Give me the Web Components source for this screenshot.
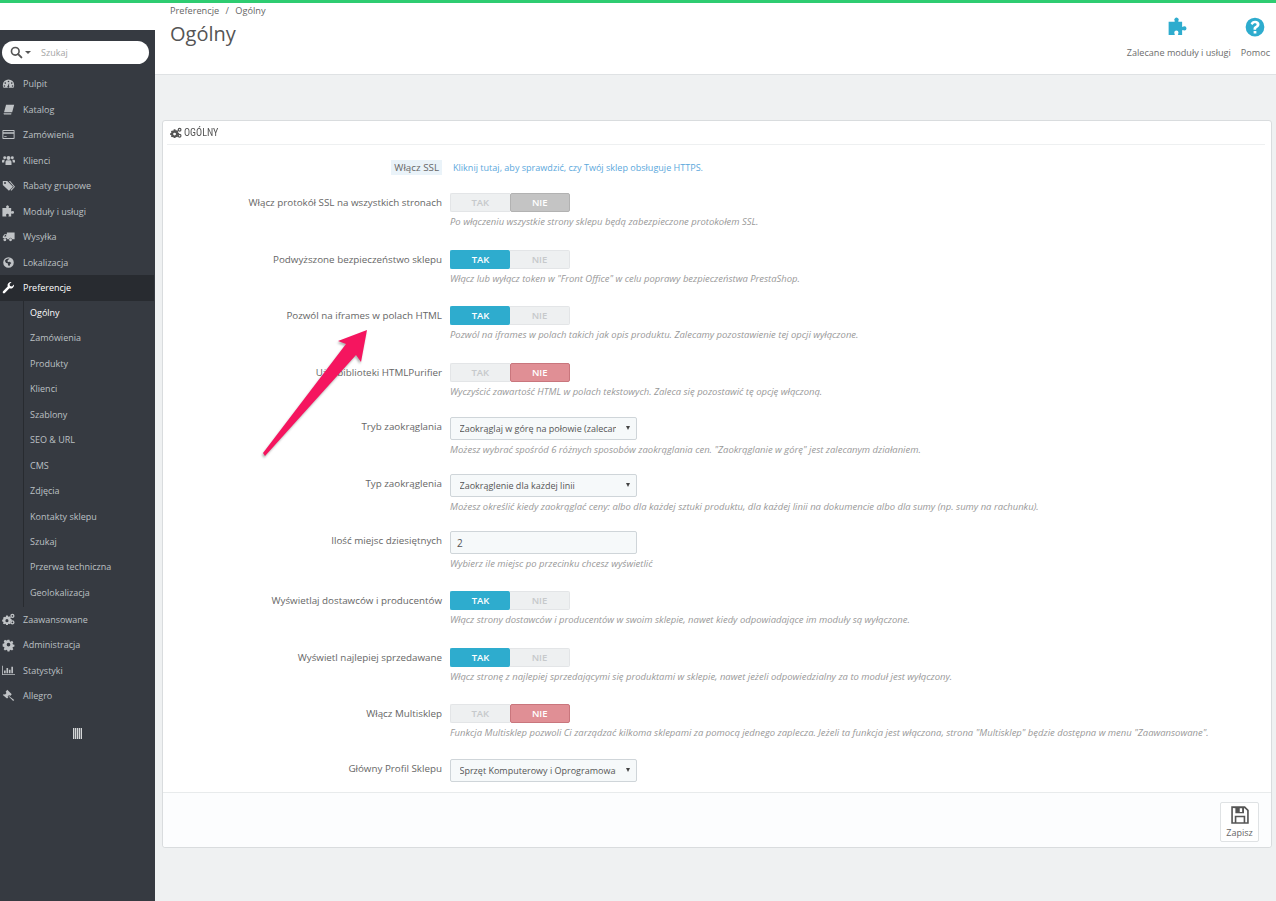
<!DOCTYPE html>
<html lang="pl">
<head>
<meta charset="utf-8">
<title>Ogólny</title>
<style>
html, body { margin: 0; padding: 0; }
body { background: #eff1f2; font-family: "Open Sans", "Liberation Sans", sans-serif; font-size: 10px; color: #555; }
</style>
</head>
<body>
<admin-app>
	<side-bar slot="side">
		<nav-item icon="dashboard">Pulpit</nav-item>
		<nav-item icon="book">Katalog</nav-item>
		<nav-item icon="card">Zamówienia</nav-item>
		<nav-item icon="users">Klienci</nav-item>
		<nav-item icon="tags">Rabaty grupowe</nav-item>
		<nav-item icon="puzzle">Moduły i usługi</nav-item>
		<nav-item icon="truck">Wysyłka</nav-item>
		<nav-item icon="globe">Lokalizacja</nav-item>
		<nav-item icon="wrench" active>Preferencje</nav-item>
		<sub-nav>
			<sub-item active>Ogólny</sub-item>
			<sub-item>Zamówienia</sub-item>
			<sub-item>Produkty</sub-item>
			<sub-item>Klienci</sub-item>
			<sub-item>Szablony</sub-item>
			<sub-item>SEO &amp; URL</sub-item>
			<sub-item>CMS</sub-item>
			<sub-item>Zdjęcia</sub-item>
			<sub-item>Kontakty sklepu</sub-item>
			<sub-item>Szukaj</sub-item>
			<sub-item>Przerwa techniczna</sub-item>
			<sub-item>Geolokalizacja</sub-item>
		</sub-nav>
		<nav-item icon="cogs">Zaawansowane</nav-item>
		<nav-item icon="cog">Administracja</nav-item>
		<nav-item icon="chart">Statystyki</nav-item>
		<nav-item icon="gavel">Allegro</nav-item>
	</side-bar>
	<page-header slot="head"></page-header>
	<form-panel slot="main" heading="Ogólny">
		<form-row label="Włącz SSL" mark>
			<a-link>Kliknij tutaj, aby sprawdzić, czy Twój sklep obsługuje HTTPS.</a-link>
		</form-row>
		<form-row label="Włącz protokół SSL na wszystkich stronach" help="Po włączeniu wszystkie strony sklepu będą zabezpieczone protokołem SSL.">
			<yes-no value="off"></yes-no>
		</form-row>
		<form-row label="Podwyższone bezpieczeństwo sklepu" help="Włącz lub wyłącz token w &quot;Front Office&quot; w celu poprawy bezpieczeństwa PrestaShop.">
			<yes-no value="on"></yes-no>
		</form-row>
		<form-row label="Pozwól na iframes w polach HTML" help="Pozwól na iframes w polach takich jak opis produktu. Zalecamy pozostawienie tej opcji wyłączone.">
			<yes-no value="on"></yes-no>
		</form-row>
		<form-row label="Użyj biblioteki HTMLPurifier" help="Wyczyścić zawartość HTML w polach tekstowych. Zaleca się pozostawić tę opcję włączoną.">
			<yes-no value="danger"></yes-no>
		</form-row>
		<form-row shift label="Tryb zaokrąglania" help="Możesz wybrać spośród 6 różnych sposobów zaokrąglania cen. &quot;Zaokrąglanie w górę&quot; jest zalecanym działaniem.">
			<fake-select>Zaokrąglaj w górę na połowie (zalecane)</fake-select>
		</form-row>
		<form-row shift label="Typ zaokrąglenia" help="Możesz określić kiedy zaokrąglać ceny: albo dla każdej sztuki produktu, dla każdej linii na dokumencie albo dla sumy (np. sumy na rachunku).">
			<fake-select>Zaokrąglenie dla każdej linii</fake-select>
		</form-row>
		<form-row tall label="Ilość miejsc dziesiętnych" help="Wybierz ile miejsc po przecinku chcesz wyświetlić">
			<text-box>2</text-box>
		</form-row>
		<form-row label="Wyświetlaj dostawców i producentów" help="Włącz strony dostawców i producentów w swoim sklepie, nawet kiedy odpowiadające im moduły są wyłączone.">
			<yes-no value="on"></yes-no>
		</form-row>
		<form-row label="Wyświetl najlepiej sprzedawane" help="Włącz stronę z najlepiej sprzedającymi się produktami w sklepie, nawet jeżeli odpowiedzialny za to moduł jest wyłączony.">
			<yes-no value="on"></yes-no>
		</form-row>
		<form-row label="Włącz Multisklep" help="Funkcja Multisklep pozwoli Ci zarządzać kilkoma sklepami za pomocą jednego zaplecza. Jeżeli ta funkcja jest włączona, strona &quot;Multisklep&quot; będzie dostępna w menu &quot;Zaawansowane&quot;.">
			<yes-no value="danger"></yes-no>
		</form-row>
		<form-row shift label="Główny Profil Sklepu">
			<fake-select>Sprzęt Komputerowy i Oprogramowanie</fake-select>
		</form-row>
	</form-panel>
	<red-arrow slot="over"></red-arrow>
</admin-app>

<script>
const ICONS = {
	search: '<circle cx="6.5" cy="6.5" r="4.7" fill="none" stroke="currentColor" stroke-width="2"/><path d="M10 10l4 4" stroke="currentColor" stroke-width="2.4" stroke-linecap="round"/>',
	dashboard: '<path fill-rule="evenodd" d="M8 3a7 7 0 0 1 7 7c0 1.300-.3 2.300-.9 3.300H1.900C1.300 12.300 1 11.300 1 10a7 7 0 0 1 7-7zM8 4.500a1 1 0 1 0 0 2 1 1 0 0 0 0-2zM4 6.500a1 1 0 1 0 0 2 1 1 0 0 0 0-2zM12 6.500a1 1 0 1 0 0 2 1 1 0 0 0 0-2zM3 10a1 1 0 1 0 0 2 1 1 0 0 0 0-2zM13 10a1 1 0 1 0 0 2 1 1 0 0 0 0-2zM8.800 7l-1.500 3.700a1.200 1.200 0 1 0 1.400.3z"/>',
	book: '<path d="M5 2h10l-2.500 9.500H2.500zM2 12.500h9.600l-.3 1.500H2.600a1.300 1.300 0 0 1-.6-1.500z"/>',
	card: '<path fill-rule="evenodd" d="M1.500 2.500h13a1 1 0 0 1 1 1v9a1 1 0 0 1-1 1h-13a1 1 0 0 1-1-1v-9a1 1 0 0 1 1-1zm.2 1.200v1.600h12.600V3.700zm0 3.500v5.100h12.600V7.200zm1 3h3v1h-3z"/>',
	users: '<circle cx="8" cy="5" r="2.500"/><circle cx="3.300" cy="4.700" r="1.800"/><circle cx="12.700" cy="4.700" r="1.800"/><path d="M4.300 13.500V10c0-1.500 1-2.300 2-2.300h3.400c1 0 2 .8 2 2.300v3.500zM0 10.500V8.500C0 7.500.7 7 1.500 7h2c-.5.700-.7 1.500-.7 2.500v1zM16 10.500V8.500C16 7.500 15.300 7 14.500 7h-2c.5.700.7 1.500.7 2.500v1z"/>',
	tags: '<path fill-rule="evenodd" d="M1 2.500h5.500l7 7-5 5-7.500-7zm2.700 1.300a1.200 1.200 0 1 0 0 2.400 1.200 1.200 0 0 0 0-2.400z"/><path d="M8.500 2.500h1.500l6 7-4.500 5-1-1 4-4z"/>',
	puzzle: '<path d="M5.500 1.200a1.700 1.700 0 0 1 3.100.8c0 .6-.4.9-.4 1.300 0 .3.200.5.600.5h2.500v3.500c0 .4.200.6.500.6.400 0 .7-.5 1.300-.5a1.700 1.700 0 0 1 0 3.400c-.6 0-.9-.4-1.300-.4-.3 0-.5.200-.5.600v3.300H8.500c-.4 0-.6-.2-.6-.5 0-.4.500-.7.500-1.300a1.700 1.700 0 0 0-3.400 0c0 .6.500.9.500 1.300 0 .3-.2.500-.6.500H.5V3.800h4.300c.4 0 .6-.2.600-.5 0-.5-.4-.8-.4-1.300 0-.3.200-.6.500-.8z"/>',
	truck: '<path fill-rule="evenodd" d="M6 3h9.500v8.500h-3a2 2 0 0 0-4 0H6.500a2 2 0 0 0-1.300-1.800H1V8l2-2.800h3zM2.500 8h2.600V6.200H3.800z"/><circle cx="3.500" cy="12" r="1.800"/><circle cx="10.500" cy="12" r="1.800"/>',
	globe: '<path fill-rule="evenodd" d="M8 1.500a6.500 6.500 0 1 1 0 13 6.500 6.500 0 0 1 0-13zM5 4l-1.500 1.800L5 8.500l2 .5.500 2.500 1.500 1 1-2.500 1.500-1.500-2-1.500-2 .5-1-1.500L8 4.300 9.500 3.300 7.500 3z"/>',
	wrench: '<path d="M14.800 4.200a4.300 4.300 0 0 1-5.600 4.800l-5.700 5.700a1.500 1.500 0 0 1-2.200-2.200L7 6.800A4.300 4.300 0 0 1 11.800 1.200L9.300 3.700l.5 2.500 2.500.5z"/>',
	cog: '<path fill-rule="evenodd" d="M6.700 1.500h2.600l.4 2 1.300.6 1.800-1.100 1.800 1.800-1.100 1.800.6 1.300 2 .4v2.600l-2 .4-.6 1.300 1.100 1.800-1.800 1.800-1.800-1.100-1.300.6-.4 1.900H6.700l-.4-1.900-1.300-.6-1.800 1.100-1.800-1.800 1.100-1.800-.6-1.300-1.900-.4V6.900l1.900-.4.6-1.300L1.400 3.400l1.800-1.800L5 2.700l1.300-.6zM8 5.700a2.500 2.500 0 1 0 0 5 2.500 2.500 0 0 0 0-5z" transform="translate(.8 .8) scale(.9)"/>',
	cogs: '<path fill-rule="evenodd" d="M4 3.500h2.200l.3 1.200 1 .4 1-.6 1.500 1.500-.6 1 .4 1 1.200.3v2.200l-1.200.3-.4 1 .6 1-1.500 1.500-1-.6-1 .4-.3 1.200H4l-.3-1.200-1-.4-1 .6L.2 13.300l.6-1-.4-1L-.8 11V8.800L.4 8.500l.4-1-.6-1 1.500-1.500 1 .6 1-.4zM5.100 8a1.900 1.900 0 1 0 0 3.800 1.900 1.900 0 0 0 0-3.800z" transform="translate(1 -.5)"/><path fill-rule="evenodd" d="M12.800 1a2.600 2.600 0 1 1 0 5.200 2.600 2.600 0 0 1 0-5.200zm0 1.600a1 1 0 1 0 0 2 1 1 0 0 0 0-2zM12.800 9a2.600 2.600 0 1 1 0 5.200 2.600 2.600 0 0 1 0-5.200zm0 1.600a1 1 0 1 0 0 2 1 1 0 0 0 0-2z"/>',
	chart: '<path d="M0 2h1v10.500h15v1H0zM2.500 8h2v3.500h-2zM5.500 5h2v6.500h-2zM8.500 7h2v4.500h-2zM11.500 3.500h2v8h-2z"/>',
	gavel: '<path d="M7.500 1l5.500 5.500-2 2L9.800 7.300l-2 2 1 1-1.500 1.500-.5-.5L2 7.500l1.500-1.500 1 1 2-2L5.500 3.500z" transform="translate(-1 0)"/><path d="M8.500 8.500l6.500 5-1.200 1.300-5.800-5.800z"/>',
	question: '<path fill-rule="evenodd" d="M8 .5a7.500 7.500 0 1 1 0 15 7.500 7.500 0 0 1 0-15zM6.900 11.200v2h2.200v-2zM8.100 3C6.300 3 5 3.900 4.500 5.400l1.600.9c.4-1 1-1.400 1.900-1.400.800 0 1.300.4 1.300 1 0 .5-.3.800-1.100 1.300-1.100.7-1.400 1.400-1.400 2.400v.6h2.100v-.4c0-.5.200-.8 1-1.300 1.100-.7 1.700-1.400 1.700-2.700C11.600 4.200 10.100 3 8.100 3z"/>',
	save: '<path fill-rule="evenodd" d="M1 1h11l3 3v11H1zM2.300 2.300v11.400h1.500V8.500h8.400v5.200h1.500V4.600l-2-2h-.5v4H4.300v-4zM5.100 9.800v3.900h5.800V9.800zM7.800 2.600v2.900h1.900V2.600z"/>'
};

class SvgIcon extends HTMLElement {
	connectedCallback() {
		const size = this.getAttribute('size') || 16;
		const shadow = this.attachShadow({ mode: 'open' });
		shadow.innerHTML = `
		<style>
		:host { display: inline-flex; width: ${size}px; height: ${size}px; }
		svg { width: 100%; height: 100%; fill: currentColor; overflow: visible; }
		</style>
		<svg viewBox="0 0 16 16">${ICONS[this.getAttribute('name')] || ''}</svg>`;
	}
}
customElements.define('svg-icon', SvgIcon);

class AdminApp extends HTMLElement {
	constructor() {
		super();
		this.attachShadow({ mode: 'open' }).innerHTML = `
		<style>
		:host { display: block; position: relative; width: 1276px; min-height: 901px; border-top: 3px solid #2ecc71; box-sizing: border-box; }
		.head { background: #fff; border-bottom: 1px solid #dfe2e4; height: 72px; box-sizing: border-box; }
		.body { display: grid; grid-template-columns: 155px 1fr; margin-top: -45px; height: 871px; }
		.main { padding: 90px 4px 0 7px; min-width: 0; }
		</style>
		<div class="head"><slot name="head"></slot></div>
		<div class="body">
			<slot name="side"></slot>
			<div class="main"><slot name="main"></slot></div>
		</div>
		<slot name="over"></slot>`;
	}
}
customElements.define('admin-app', AdminApp);

class SideBar extends HTMLElement {
	constructor() {
		super();
		this.attachShadow({ mode: 'open' }).innerHTML = `
		<style>
		:host { display: block; background: #363a41; position: relative; }
		.search { display: flex; align-items: center; height: 23px; width: 147px; margin: 11px 0 0 2px; background: #fff; border-radius: 12px; box-sizing: border-box; padding-left: 8px; color: #555; }
		.caret { width: 0; height: 0; border: 3px solid transparent; border-top: 3px solid #555; border-bottom: 0; margin-left: 2px; }
		.ph { margin-left: 10px; font-size: 9px; color: #a5a5a5; }
		nav { display: block; margin-top: 7px; }
		.toggle { display: flex; justify-content: center; margin-top: 19px; }
		.bars { width: 9px; height: 11px; background: repeating-linear-gradient(90deg, #d5d7d8 0 1px, #6d7076 1px 2px); }
		</style>
		<div class="search"><svg-icon name="search" size="13"></svg-icon><span class="caret"></span><span class="ph">Szukaj</span></div>
		<nav><slot></slot></nav>
		<div class="toggle"><div class="bars"></div></div>`;
	}
}
customElements.define('side-bar', SideBar);

class NavItem extends HTMLElement {
	connectedCallback() {
		const shadow = this.attachShadow({ mode: 'open' });
		shadow.innerHTML = `
		<style>
		:host { display: flex; align-items: center; height: 25.5px; font-size: 9px; color: #bcc0c4; padding-left: 2px; box-sizing: border-box; }
		:host([active]) { background: #282b30; color: #fff; margin-right: 1px; }
		svg-icon { color: #c0c3c6; margin-right: 8px; }
		:host([active]) svg-icon { color: #fff; }
		</style>
		<svg-icon name="${this.getAttribute('icon')}" size="13"></svg-icon><slot></slot>`;
	}
}
customElements.define('nav-item', NavItem);

class SubNav extends HTMLElement {
	constructor() {
		super();
		this.attachShadow({ mode: 'open' }).innerHTML = `
		<style>
		:host { display: block; margin: -0.5px 0 0 23px; border-left: 1px solid #282b30; height: 305.5px; padding-left: 6px; padding-bottom: 1px; }
		</style>
		<slot></slot>`;
	}
}
customElements.define('sub-nav', SubNav);

class SubItem extends HTMLElement {
	constructor() {
		super();
		this.attachShadow({ mode: 'open' }).innerHTML = `
		<style>
		:host { display: block; line-height: 25.45px; height: 25.45px; font-size: 9px; color: #bcc0c4; }
		:host([active]) { color: #fff; }
		</style>
		<slot></slot>`;
	}
}
customElements.define('sub-item', SubItem);

class PageHeader extends HTMLElement {
	constructor() {
		super();
		this.attachShadow({ mode: 'open' }).innerHTML = `
		<style>
		:host { display: flex; justify-content: space-between; height: 71px; padding-left: 170px; font-size: 9.1px; color: #666; }
		.crumbs { padding-top: 1px; line-height: 13px; font-size: 9.2px; }
		.crumbs span { margin: 0 4px; }
		h1 { margin: 2px 0 0; font-size: 20px; line-height: 30px; font-weight: 400; color: #555; }
		.tools { display: flex; gap: 10px; padding: 14px 6px 0 0; }
		.tool { display: flex; flex-direction: column; align-items: center; gap: 9px; line-height: 13px; color: #6c6c6c; }
		.tool svg-icon { color: #2eacce; }
		.tool:first-child svg-icon { margin-right: 2px; }
		</style>
		<div>
			<div class="crumbs">Preferencje <span>/</span> Ogólny</div>
			<h1>Ogólny</h1>
		</div>
		<div class="tools">
			<div class="tool"><svg-icon name="puzzle" size="20"></svg-icon>Zalecane moduły i usługi</div>
			<div class="tool"><svg-icon name="question" size="20"></svg-icon>Pomoc</div>
		</div>`;
	}
}
customElements.define('page-header', PageHeader);

class FormPanel extends HTMLElement {
	connectedCallback() {
		const shadow = this.attachShadow({ mode: 'open' });
		shadow.innerHTML = `
		<style>
		:host { display: block; background: #fff; border: 1px solid #d9dcde; border-radius: 3px; box-sizing: border-box; height: 728px; position: relative; }
		.title { display: flex; align-items: center; gap: 2px; height: 23px; margin: 0 6px 0 4px; padding-left: 3px; border-bottom: 1px solid #eef0f1; color: #555; }
		.title b { font: 400 11px "Liberation Sans Narrow", "Roboto Condensed", "Liberation Sans", sans-serif; text-transform: uppercase; display: inline-block; transform: scaleX(.92); transform-origin: left; }
		.rows { display: block; padding-top: 13px; }
		.foot { position: absolute; left: 0; right: 0; bottom: 0; height: 55px; border-top: 1px solid #e8ebec; background: #fcfdfe; display: flex; justify-content: flex-end; align-items: flex-start; padding: 9px 12px 0 0; box-sizing: border-box; border-radius: 0 0 3px 3px; }
		.save { display: flex; flex-direction: column; align-items: center; justify-content: center; width: 39px; height: 40px; box-sizing: border-box; border: 1px solid #dfe2e4; border-radius: 2px; background: #fff; color: #666; font-size: 9px; gap: 1px; }
		.save svg-icon { color: #555; }
		</style>
		<div class="title"><svg-icon name="cogs" size="12"></svg-icon><b>${this.getAttribute('heading')}</b></div>
		<div class="rows"><slot></slot></div>
		<div class="foot"><div class="save"><svg-icon name="save" size="20"></svg-icon>Zapisz</div></div>`;
	}
}
customElements.define('form-panel', FormPanel);

class FormRow extends HTMLElement {
	connectedCallback() {
		const shadow = this.attachShadow({ mode: 'open' });
		const help = this.getAttribute('help');
		shadow.innerHTML = `
		<style>
		:host { display: grid; grid-template-columns: 279px 1fr; column-gap: 8px; align-items: start; height: 56.5px; font-size: 9.8px; color: #666; }
		:host([mark]) { height: 35px; }
		:host([tall]) { height: 59px; }
		:host([shift]) .label, :host([shift]) ::slotted(*) { margin-top: -2px; }
		:host([tall]) .label, :host([tall]) ::slotted(*) { margin-top: -1px; }
		.label { text-align: right; line-height: 20px; white-space: nowrap; }
		.mark { background: #eaf3f9; padding: 1px 3px; }
		.help { font-style: italic; font-size: 9.46px; color: #999; line-height: 13px; margin-top: 3px; white-space: nowrap; }
		</style>
		<div class="label"><span class="${this.hasAttribute('mark') ? 'mark' : ''}">${this.getAttribute('label')}</span></div>
		<div><slot></slot>${help ? `<div class="help">${help.replace(/"/g, '&quot;')}</div>` : ''}</div>`;
	}
}
customElements.define('form-row', FormRow);

class ALink extends HTMLElement {
	constructor() {
		super();
		this.attachShadow({ mode: 'open' }).innerHTML = `
		<style>:host { display: block; color: #5ba8dc; line-height: 20px; margin-left: 3px; font-size: 9.05px; }</style><slot></slot>`;
	}
}
customElements.define('a-link', ALink);

class YesNo extends HTMLElement {
	connectedCallback() {
		const value = this.getAttribute('value');
		const shadow = this.attachShadow({ mode: 'open' });
		shadow.innerHTML = `
		<style>
		:host { display: flex; width: 120px; height: 19px; font-size: 9.5px; font-weight: 600; }
		div { flex: 1; display: flex; align-items: center; justify-content: center; background: #eef0f1; color: #c6c9cb; border: 1px solid #e3e5e7; box-sizing: border-box; }
		.a { border-radius: 2px 0 0 2px; border-right: 0; }
		.b { border-radius: 0 2px 2px 0; border-left: 0; }
		.on { background: #2eacce; border-color: #2eacce; color: #fff; border-radius: 2px; }
		.off { background: #c4c4c4; border: 1px solid #b2b2b2; color: #fff; border-radius: 2px; }
		.danger { background: #e08f95; border: 1px solid #c9767d; color: #fff; border-radius: 2px; }
		</style>
		<div class="a ${value === 'on' ? 'on' : ''}">TAK</div>
		<div class="b ${value !== 'on' ? value : ''}">NIE</div>`;
	}
}
customElements.define('yes-no', YesNo);

class FakeSelect extends HTMLElement {
	constructor() {
		super();
		this.attachShadow({ mode: 'open' }).innerHTML = `
		<style>
		:host { display: flex; align-items: center; width: 187px; height: 23px; box-sizing: border-box; border: 1px solid #cfd5d9; border-radius: 2px; background: #f6f9fa; padding-left: 8.5px; font-size: 9px; color: #555; position: relative; }
		.t { width: 156px; overflow: hidden; white-space: nowrap; }
		.c { position: absolute; right: 6px; top: 8px; width: 0; height: 0; border: 2.5px solid transparent; border-top: 4px solid #444; border-bottom: 0; }
		</style>
		<div class="t"><slot></slot></div><span class="c"></span>`;
	}
}
customElements.define('fake-select', FakeSelect);

class TextBox extends HTMLElement {
	constructor() {
		super();
		this.attachShadow({ mode: 'open' }).innerHTML = `
		<style>
		:host { display: flex; align-items: center; width: 187px; height: 23px; box-sizing: border-box; border: 1px solid #cfd5d9; border-radius: 2px; background: #f6f9fa; padding-left: 6px; font-size: 10px; color: #555; }
		</style>
		<slot></slot>`;
	}
}
customElements.define('text-box', TextBox);

class RedArrow extends HTMLElement {
	constructor() {
		super();
		this.attachShadow({ mode: 'open' }).innerHTML = `
		<style>
		:host { position: absolute; left: 250px; top: 317px; display: block; width: 130px; height: 150px; }
		svg { display: block; overflow: visible; filter: drop-shadow(-1px 2px 1px rgba(0,0,0,.3)); }
		</style>
		<svg width="130" height="150" viewBox="250 320 130 150"><path fill="#f5155f" d="M367 330L338 341 346 344 263 453 265 456 356 355 361 362z"/></svg>`;
	}
}
customElements.define('red-arrow', RedArrow);
</script>
</body>
</html>
